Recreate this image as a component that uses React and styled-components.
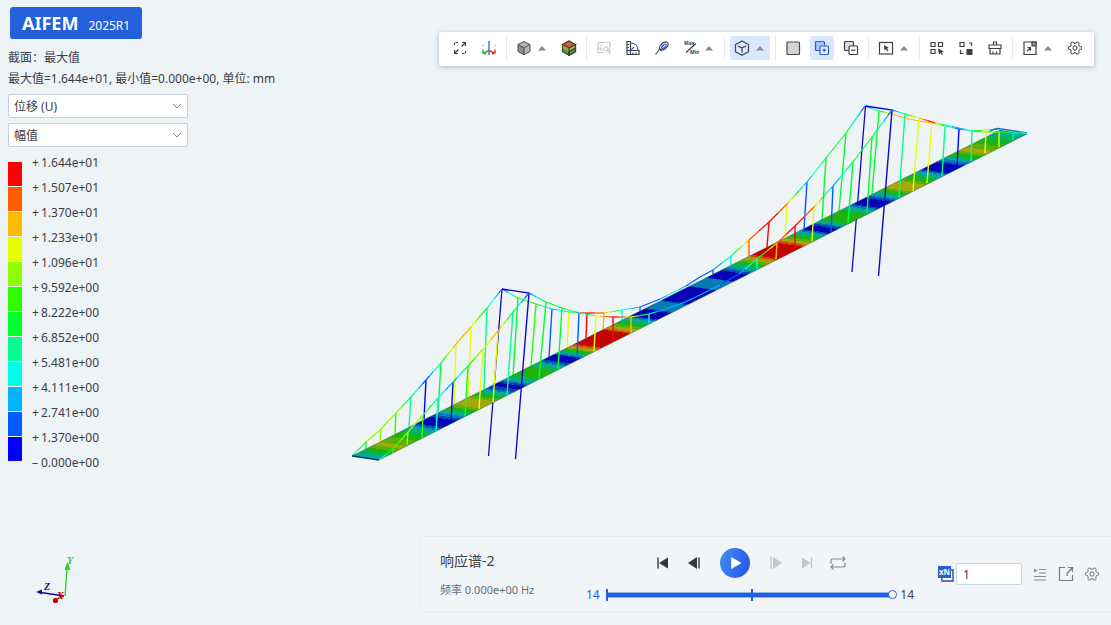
import React, { useState } from "react";
import styled, { createGlobalStyle, css } from "styled-components";
import { Settings } from "lucide-react";

const GlobalStyle = createGlobalStyle`
  * { box-sizing: border-box; }
  body {
    margin: 0;
    background: #eef3f6;
    color: #3c4046;
    font-family: "Noto Sans", "Noto Sans CJK SC", sans-serif;
    font-size: 12px;
  }
  button, input, select { font: inherit; color: inherit; }
  button { border: 0; padding: 0; background: none; cursor: pointer; }
`;

const blue = "#2460dc";

const Page = styled.main`
  display: grid;
  grid-template-columns: minmax(300px, 420px) minmax(0, 1fr);
  grid-template-rows: auto 1fr auto;
  min-height: 100vh;
  overflow: hidden;
`;

const Scene = styled.svg`
  grid-area: 1 / 1 / 4 / 3;
  width: 100%;
  height: 100%;
  min-height: 0;
`;

const Sidebar = styled.aside`
  grid-area: 1 / 1 / 3 / 2;
  z-index: 1;
  padding: 7px 0 0 8px;
`;

const Logo = styled.h1`
  display: inline-flex;
  align-items: baseline;
  gap: 10px;
  height: 32px;
  margin: 0 0 8px 2px;
  padding: 0 12px;
  border-radius: 3px;
  background: ${blue};
  color: #fff;
  font-size: 18px;
  font-weight: 700;
  line-height: 32px;
`;

const Version = styled.span`
  font-size: 12px;
  font-weight: 400;
`;

const Info = styled.p`
  margin: 0;
  line-height: 21px;
  white-space: nowrap;
`;

const Fields = styled.div`
  display: grid;
  gap: 5px;
  width: 180px;
  margin-top: 5px;
`;

const SelectBox = styled.label`
  display: grid;
  grid-template-columns: 1fr 19px;
  align-items: center;

  svg {
    grid-area: 1 / 2;
    pointer-events: none;
  }
`;

const Select = styled.select`
  grid-area: 1 / 1 / 2 / 3;
  appearance: none;
  height: 24px;
  padding: 0 22px 0 5px;
  border: 1px solid #c6cfda;
  border-radius: 2px;
  background: #fff;
`;

const Legend = styled.div`
  display: flex;
  gap: 10px;
  margin-top: 3px;
`;

const Swatches = styled.div`
  display: grid;
  grid-auto-rows: 24px;
  gap: 1px;
  width: 14px;
  padding-top: 12px;
`;

const Swatch = styled.span`
  background: ${(p) => p.$color};
`;

const Values = styled.ul`
  margin: 0;
  padding: 0;
  list-style: none;
  line-height: 25px;
`;

const Value = styled.li`
  display: grid;
  grid-template-columns: 9px auto;
`;

const Toolbar = styled.div`
  grid-area: 1 / 2;
  z-index: 1;
  justify-self: end;
  display: flex;
  align-items: center;
  gap: 5px;
  height: 34px;
  margin: 32px 17px 0 0;
  padding: 0 7px 2px 9px;
  border-radius: 2px;
  background: #fff;
  box-shadow: 0 1px 5px rgba(60, 75, 95, 0.35);
`;

const Divider = styled.span`
  width: 1px;
  height: 24px;
  background: #e8eaed;
`;

const ToolButton = styled.button`
  display: flex;
  align-items: center;
  justify-content: center;
  width: ${(p) => (p.$menu ? 40 : 24)}px;
  height: 24px;
  border-radius: 2px;
  ${(p) => p.$active && css`background: #dbe7fd;`}
  ${(p) => p.$menu && css`justify-content: flex-start; padding-left: 4px; gap: 6px;`}
`;

const Triad = styled.svg`
  grid-area: 3 / 1;
  z-index: 1;
  align-self: end;
  width: 60px;
  height: 60px;
  margin: 0 0 15px 28px;
`;

const Player = styled.section`
  grid-area: 3 / 2;
  z-index: 1;
  display: grid;
  grid-template-columns: 146px minmax(0, 1fr) auto;
  align-items: center;
  height: 76px;
  margin-bottom: 13px;
  padding: 0 9px 0 19px;
  border: 1px solid #e7ecf0;
  border-right: 0;
  border-radius: 3px 0 0 3px;
  background: #f1f5f8;
`;

const StepInfo = styled.div`
  display: grid;
  gap: 9px;
  padding-top: 2px;
`;

const StepName = styled.h2`
  margin: 0;
  font-size: 14px;
  font-weight: 400;
  line-height: 20px;
`;

const Frequency = styled.p`
  margin: 0;
  color: #6a6f76;
  font-size: 11px;
  line-height: 20px;
`;

const Transport = styled.div`
  display: grid;
  gap: 8px;
  padding-top: 3px;
`;

const Controls = styled.div`
  display: flex;
  align-items: center;
  justify-content: center;
  gap: 7px;
`;

const IconButton = styled.button`
  display: grid;
  place-items: center;
  width: ${(p) => (p.$small ? 20 : 24)}px;
  height: 24px;
  color: ${(p) => p.$tone || "#34383d"};
`;

const PlayButton = styled.button`
  display: grid;
  place-items: center;
  width: 30px;
  height: 30px;
  margin: 0 7px;
  border-radius: 50%;
  background: linear-gradient(110deg, #4390f4, #2352e6);
`;

const Timeline = styled.div`
  display: grid;
  grid-template-columns: auto minmax(0, 1fr) auto;
  align-items: center;
  line-height: 18px;
`;

const Start = styled.output`
  margin-right: 6px;
  color: ${blue};
`;

const End = styled.output`
  margin-left: 3px;
`;

const Range = styled.input`
  appearance: none;
  width: 100%;
  height: 12px;
  margin: 0;
  background:
    linear-gradient(${blue}, ${blue}) 0 0 / 2px 12px no-repeat,
    linear-gradient(${blue}, ${blue}) 50% 0 / 2px 12px no-repeat,
    linear-gradient(${blue}, ${blue}) 0 50% / calc(100% - 5px) 4px no-repeat,
    linear-gradient(#8fb2f2, #8fb2f2) 0 50% / calc(100% - 5px) 6px no-repeat;

  &::-webkit-slider-thumb {
    appearance: none;
    width: 9px;
    height: 9px;
    border: 1px solid ${blue};
    border-radius: 50%;
    background: #fff;
  }
`;

const Options = styled.div`
  display: flex;
  align-items: center;
  gap: 6px;
  margin-left: 24px;
`;

const Speed = styled.label`
  display: flex;
  align-items: center;
  gap: 2px;
  margin-right: 2px;
`;

const SpeedInput = styled.input`
  width: 66px;
  height: 22px;
  padding: 0 6px;
  border: 1px solid #ccd7e4;
  border-radius: 2px;
  background: #fff;
`;

/* Contour scale, lowest value first */
const scale = ["#0000ff", "#005cff", "#00b4ff", "#00ffe8", "#00ff8c", "#00ff2e", "#2eff00", "#8cff00", "#e8ff00", "#ffb900", "#ff5c00", "#ff0000"];
const values = ["+1.644e+01", "+1.507e+01", "+1.370e+01", "+1.233e+01", "+1.096e+01", "+9.592e+00", "+8.222e+00", "+6.852e+00", "+5.481e+00", "+4.111e+00", "+2.741e+00", "+1.370e+00", "–0.000e+00"];

/* Shaded deck versions of the scale colours */
const deckScale = ["#0404b4", "#0446b8", "#087ab4", "#06a8a0", "#08b070", "#0cb43c", "#1eb40c", "#5cae08", "#a4a80c", "#c08806", "#c44a04", "#c40404"];

/* Displacement level along the deck: [position 0..1, level 0..11] */
const profile = [
  [0, 2.5], [0.012, 4], [0.022, 6], [0.036, 8], [0.05, 7], [0.065, 6], [0.085, 3.5], [0.1, 0.5], [0.118, 0.2], [0.135, 3], [0.148, 6],
  [0.16, 8], [0.172, 8.4], [0.184, 6.6], [0.2, 3.5], [0.21, 0.6], [0.224, 0.3], [0.236, 3], [0.25, 5.6], [0.266, 6.3], [0.284, 3],
  [0.295, 0.5], [0.31, 0.4], [0.32, 4], [0.332, 8], [0.346, 11], [0.384, 11], [0.396, 8], [0.41, 5.5], [0.422, 2.8], [0.43, 0.3],
  [0.45, 0.2], [0.453, 2], [0.473, 2], [0.478, 0.2], [0.518, 0.2], [0.522, 2], [0.544, 2], [0.548, 0.2], [0.568, 0.4], [0.582, 3.2],
  [0.594, 6], [0.608, 8.6], [0.618, 11], [0.652, 11], [0.663, 8], [0.675, 6], [0.688, 2.8], [0.696, 0.4], [0.708, 0.4], [0.72, 4],
  [0.73, 6.3], [0.75, 5.8], [0.763, 3], [0.773, 0.4], [0.79, 0.3], [0.803, 3], [0.815, 6], [0.826, 8.2], [0.84, 8], [0.852, 6.2],
  [0.87, 3], [0.88, 0.4], [0.9, 0.3], [0.914, 3.2], [0.926, 6], [0.94, 8], [0.952, 7.2], [0.965, 6], [0.985, 4], [1, 2.2],
];

const levelAt = (t) => {
  const i = Math.max(1, profile.findIndex((p) => p[0] >= t));
  const [t0, v0] = profile[i - 1];
  const [t1, v1] = profile[i];
  return Math.round(v0 + ((v1 - v0) * (t - t0)) / (t1 - t0));
};

const deckStops = [];
for (let i = 0; i <= 648; i++) {
  const t = i / 648;
  const color = deckScale[levelAt(t)];
  const last = deckStops[deckStops.length - 1];
  if (!last || last.color !== color) {
    if (last) deckStops.push({ t, color: last.color });
    deckStops.push({ t, color });
  }
}

/* Cable nodes: [x, y, level at the node] */
const backCable = [
  [352, 456, 3], [366, 442, 6], [381, 429, 7], [396, 413, 7], [411, 397, 4], [426, 380, 0], [441, 363, 4], [456, 344, 9], [471, 327, 8],
  [487, 308, 4], [502, 289, 0], [518, 298, 5], [536, 304, 6], [552, 309, 1], [569, 312, 4], [587, 313, 11], [604, 313, 9], [622, 310, 3],
  [640, 307, 1], [660, 299, 1], [672, 293, 3], [686, 286, 1], [700, 277, 1], [713, 270, 1], [731, 256, 3], [749, 240, 9], [769, 222, 11],
  [787, 204, 9], [807, 182, 1], [826, 158, 5], [846, 133, 5], [865, 106, 0], [879, 111, 4], [892, 114, 9], [905, 118, 9], [919, 121, 8],
  [932, 123, 9], [945, 125, 3], [959, 128, 1], [972, 131, 3], [986, 130, 7], [999, 129, 3],
];
const frontCable = [
  [379, 460, 3], [393, 449, 5], [408, 432, 7], [423, 415, 6], [438, 398, 3], [453, 382, 1], [468, 366, 5], [483, 349, 7], [498, 331, 9],
  [513, 312, 4], [529, 293, 0], [546, 302, 5], [562, 308, 5], [579, 313, 1], [596, 316, 7], [613, 317, 11], [631, 317, 8], [649, 314, 3],
  [666, 309, 1], [685, 302, 2], [702, 294, 2], [720, 285, 1], [739, 274, 1], [757, 259, 4], [777, 243, 9], [795, 226, 11], [814, 207, 9],
  [833, 186, 1], [853, 162, 4], [872, 137, 5], [892, 110, 0], [905, 114, 4], [919, 118, 8], [932, 122, 11], [945, 126, 4], [959, 129, 0],
  [972, 131, 4], [986, 132, 7], [999, 132, 5], [1013, 133, 4], [1027, 133, 2],
];

/* Hangers: [x top, y top, x bottom, y bottom, level] */
const backHangers = [
  [366, 442, 366, 449, 5], [381, 429, 380, 441, 7], [396, 413, 395, 434, 6], [411, 397, 409, 427, 4], [426, 380, 424, 419, 0],
  [441, 363, 438, 412, 5], [456, 344, 454, 404, 8], [471, 327, 468, 397, 8], [487, 308, 484, 389, 4], [518, 298, 513, 376, 5],
  [536, 304, 531, 366, 6], [552, 309, 549, 357, 1], [569, 312, 567, 347, 8], [587, 313, 586, 338, 11], [604, 313, 603, 330, 9],
  [622, 310, 622, 320, 3], [640, 307, 640, 311, 1], [713, 270, 713, 274, 1], [731, 256, 731, 265, 3], [749, 240, 749, 256, 10],
  [769, 222, 767, 247, 11], [787, 204, 785, 237, 8], [807, 182, 804, 229, 1], [826, 158, 822, 220, 5], [846, 133, 839, 211, 5],
  [879, 111, 872, 194, 5],
];
const frontHangers = [
  [393, 449, 393, 453, 6], [408, 432, 407, 445, 7], [423, 415, 422, 438, 6], [438, 398, 436, 431, 3], [453, 382, 451, 423, 0],
  [468, 366, 465, 416, 5], [483, 349, 479, 409, 8], [498, 331, 493, 402, 8], [513, 312, 507, 395, 4], [546, 302, 539, 379, 5],
  [562, 308, 558, 369, 5], [579, 313, 577, 359, 1], [596, 316, 594, 351, 8], [613, 317, 613, 342, 11], [631, 317, 631, 333, 9],
  [649, 314, 649, 323, 3], [739, 274, 738, 279, 0], [757, 259, 757, 269, 3], [777, 243, 776, 259, 9], [795, 226, 795, 250, 11],
  [814, 207, 812, 241, 8], [833, 186, 831, 232, 1], [853, 162, 848, 223, 5], [872, 137, 867, 213, 5], [905, 114, 899, 197, 4],
  [919, 119, 913, 191, 8], [932, 123, 927, 183, 8], [945, 127, 942, 176, 4], [959, 129, 957, 167, 0], [972, 131, 971, 161, 4],
  [986, 131, 985, 153, 8], [999, 131, 999, 147, 8], [1013, 133, 1013, 140, 4],
];

function Cable({ id, nodes }) {
  return nodes.slice(1).map(([x, y, level], i) => {
    const [x0, y0, level0] = nodes[i];
    const steps = Math.max(1, Math.abs(level - level0));
    return (
      <g key={id + i} strokeWidth="1.2">
        {Array.from({ length: steps }, (_, k) => (
          <line
            key={k}
            x1={x0 + ((x - x0) * k) / steps}
            y1={y0 + ((y - y0) * k) / steps}
            x2={x0 + ((x - x0) * (k + 1)) / steps}
            y2={y0 + ((y - y0) * (k + 1)) / steps}
            stroke={scale[Math.round(level0 + ((level - level0) * (k + 0.5)) / steps)]}
          />
        ))}
      </g>
    );
  });
}

const Hangers = ({ items }) =>
  items.map(([x1, y1, x2, y2, level]) => (
    <line key={x1} x1={x1} y1={y1} x2={x2} y2={y2} stroke={scale[level]} strokeWidth="1.4" />
  ));

function BridgeModel() {
  return (
    <Scene viewBox="0 0 1111 625" role="img" aria-label="桥梁位移云图">
      <defs>
        <linearGradient id="deck">
          {deckStops.map((s, i) => <stop key={i} offset={s.t} stopColor={s.color} />)}
        </linearGradient>
      </defs>
      <g stroke="#0a0ac8" strokeWidth="1.3">
        <path d="M502 289 488.500 456M865.500 106 852 272" fill="none" />
      </g>
      <Hangers items={backHangers} />
      <Cable id="b" nodes={backCable} />
      <rect width="1" height="1" fill="url(#deck)" transform="matrix(648 -326 27 4 352 456)" />
      <path d="M352 456 1000 130M379 460 1027 134" stroke="#2c4a3c" strokeWidth=".6" opacity=".7" />
      <path d="M352 456 379 460" stroke="#083c78" strokeWidth="1.4" />
      <path d="M989 132Q996 127 1001 129L1027 133" fill="none" stroke="#0880a8" strokeWidth="1.5" />
      <path d="M502 289 529 293 515.500 459M865.500 106 892 110 878.500 276" fill="none" stroke="#0a0ac8" strokeWidth="1.4" />
      <Hangers items={frontHangers} />
      <Cable id="f" nodes={frontCable} />
    </Scene>
  );
}

const Icon = ({ size = 16, children }) => (
  <svg width={size} height={size} viewBox="0 0 16 16" fill="none" stroke="currentColor" strokeWidth="1.2" aria-hidden="true">
    {children}
  </svg>
);

const Caret = () => (
  <svg width="8" height="5" viewBox="0 0 8 5" aria-hidden="true"><path d="M4 0 8 4.500H0z" fill="#85888c" /></svg>
);

const GearIcon = styled(Settings).attrs({ size: 16, strokeWidth: 1.6 })`
  color: ${(p) => p.$tone || "#55595e"};
  transform: rotate(30deg);
`;

const tools = [
  { name: "适应窗口", icon: <Icon><path d="M6 2.500H2.500V6M10 13.500h3.500V10" strokeDasharray="2.500 1.200" /><path d="M9.500 6.500 13.500 2.500M10 2.500h3.500V6M6.500 9.500 2.500 13.500M2.500 10v3.500H6" /></Icon> },
  { name: "坐标系", icon: <Icon><path d="M8 1v14" stroke="#3a6cd8" strokeWidth="1.400" /><path d="M8 10.500 2.500 13M2 9.500v3.500l3 1" stroke="#20b040" strokeWidth="1.400" /><path d="m8 10.500 5.500 2.500M14 9.500v3.500l-3 1" stroke="#e03030" strokeWidth="1.400" /><path d="M2 4.500v2M14 4.500v2" stroke="#bbb" /></Icon> },
  null,
  { name: "实体显示", menu: true, icon: <Icon><path d="M8 1.500 14 4.500v7L8 14.800 2 11.500v-7z" fill="#b4b6b8" stroke="none" /><path d="M2 4.500 8 8v6.800L2 11.500z" fill="#8e9092" stroke="none" /><path d="M8 1.500 14 4.500v7L8 14.800 2 11.500v-7zM2 4.500 8 8l6-3.500M8 8v6.500" stroke="#3c3e40" strokeWidth=".9" /></Icon> },
  { name: "云图", icon: <Icon><path d="M1.500 4.500 8 1l6.500 3.500L8 8z" fill="#d9622c" /><path d="M1.500 4.500 8 8v7.200l-6.500-3.500z" fill="#46a044" /><path d="M14.500 4.500 8 8v7.200l6.500-3.500z" fill="#d8a838" /><path d="m8 11.500 6.500-3.500v3.700L8 15.200z" fill="#4a9838" /><path d="m1.500 4.500 6.500 3.500v3.500L1.500 8z" fill="#c8b43c" stroke="none" opacity=".6" /><path d="m8 1 6.500 3.500v7.200L8 15.200l-6.500-3.500V4.500zM1.500 4.500 8 8l6.500-3.500M8 8v7" stroke="#4a4038" strokeWidth=".7" /></Icon> },
  null,
  { name: "查询", icon: <Icon><g stroke="#c8cacc"><path d="M8 12.500H2v-10h12v5M4 5.500h3M4 10h3" /><circle cx="10" cy="9" r="2" /><path d="M4 10V8h2M11.500 10.500 14.500 14M12.500 8l1.500 2v4" /></g></Icon> },
  { name: "测量", icon: <Icon><path d="M2 1.500h3.500v9H14v4H2zM2 4.500h2M2 7.500h2M2 10.500h3.500v4M8 14.500v-2M11 14.500v-2" /><path d="M5.500 3C10 3 13 6 13 10.500M5.500 10.500 9 7" stroke="#2460dc" /></Icon> },
  { name: "探针", icon: <Icon><path d="m1.500 14.500 4-5M5 8l3 3" /><path d="M5.500 9C5 6 9 1.500 12.500 2c2.500.5 2 3.500 0 5.500S8 11.500 5.500 9z" /><path d="M7.500 8c0-2 2.500-4 4-4s.5 2-.5 3-2.500 2-3.500 1z" stroke="#2460dc" /></Icon> },
  { name: "最大最小", menu: true, icon: <Icon><path d="m3 12.500 10-9" /><g fill="currentColor" stroke="none" fontSize="5" fontWeight="700"><text x="1" y="5">Max</text><text x="7" y="14">Min</text></g></Icon> },
  null,
  { name: "视图", menu: true, active: true, icon: <Icon><path d="m8 1 6.500 3.500v7.300L8 15.300l-6.500-3.500V4.500z" strokeLinejoin="round" stroke="#3c4252" /><path d="m4 6 4 2 4-2M8 8v4.500" stroke="#3c4252" /></Icon> },
  null,
  { name: "框选", icon: <Icon><rect x="2" y="2" width="12.500" height="12.500" rx="1" fill="#d3d3d3" stroke="#4a4a4a" /></Icon> },
  { name: "添加选择", active: true, icon: <Icon><rect x="1.500" y="1.500" width="9" height="9" rx="1" fill="#a9c4fa" stroke="#2b5fd4" /><rect x="6" y="6" width="8.500" height="8.500" rx="1" fill="#e6eeff" stroke="#2b5fd4" /><path d="M8.500 10.200h3.500M10.200 8.500V12" stroke="#2b5fd4" /></Icon> },
  { name: "移除选择", icon: <Icon><rect x="1.500" y="1.500" width="9" height="9" rx="1" fill="#ddd" /><rect x="6" y="6" width="8.500" height="8.500" rx="1" fill="#fff" /><path d="M8 10.200h4.500" /></Icon> },
  null,
  { name: "选取", menu: true, icon: <Icon><rect x="1.500" y="2.500" width="13" height="11.500" /><path d="m6 5 5 3-2 .6 1.500 2.200-1 .7L8 9.300l-1.500 1.500z" fill="currentColor" stroke="none" /></Icon> },
  null,
  { name: "多选", icon: <Icon><path d="M2 2.500h4v4H2zM9.500 2.500h4v4h-4zM2 9.500h4v4H2z" /><path d="m9 8.500 6 3-2.500.8 1.500 2-1 .7-1.500-2L10 14.500z" fill="currentColor" stroke="none" /></Icon> },
  { name: "反选", icon: <Icon><path d="M2 2.500h4v4H2zM11 3h2.500v3M2.500 10v3.500h3" /><path d="M8.500 9h6v6h-6z" fill="currentColor" stroke="none" /></Icon> },
  { name: "清除", icon: <Icon><path d="M6.500 4.500V2h3v2.500M2 5h12v3.500H2zM3 8.500V14h10V8.500M6 14v-2.500M9.500 14v-2.500" /></Icon> },
  null,
  { name: "导出视图", menu: true, icon: <Icon><path d="M2 2h12v12.500H2z" /><path d="M10 2h4v4h-4z" fill="#999" /><path d="m5 11 3.500-3.500M5.500 7.500h3v3.300" /></Icon> },
  { name: "设置", icon: <GearIcon /> },
];

function ToolStrip() {
  return (
    <Toolbar role="toolbar" aria-label="视图工具">
      {tools.map((tool, i) =>
        tool ? (
          <ToolButton key={tool.name} type="button" aria-label={tool.name} $menu={tool.menu} $active={tool.active}>
            {tool.icon}
            {tool.menu && <Caret />}
          </ToolButton>
        ) : (
          <Divider key={i} />
        )
      )}
    </Toolbar>
  );
}

const DropDown = ({ label, option }) => (
  <SelectBox>
    <Select aria-label={label}><option>{option}</option></Select>
    <svg width="16" height="10" viewBox="0 0 16 10" fill="none" stroke="#7c8188" aria-hidden="true"><path d="m4 3 4 4 4-4" /></svg>
  </SelectBox>
);

function AxisTriad() {
  return (
    <Triad viewBox="28 550 60 60" role="img" aria-label="坐标轴">
      <path d="M65 596 67 569" stroke="#1fd81f" strokeWidth="1.300" />
      <path d="m67.500 562 3 8-6-.5z" fill="#1fd81f" />
      <path d="M64 596 41 592.500" stroke="#0a0aa0" strokeWidth="1.300" />
      <path d="m36 592 6-2.500v5z" fill="#0a0aa0" />
      <circle cx="55.500" cy="600.500" r="2.600" fill="#b80000" />
      <path d="m57 599 7-3" stroke="#c00" />
      <g fontFamily="Liberation Serif, serif" fontStyle="italic" fontSize="10">
        <text x="67" y="564" fill="#1fd81f" fontWeight="700">Y</text>
        <text x="44" y="590" fill="#0a0aa0" fontWeight="700">Z</text>
        <text x="57" y="599" fill="#c00000" fontWeight="700">X</text>
      </g>
    </Triad>
  );
}

function PlayerBar() {
  const [frame, setFrame] = useState(14);
  const [speed, setSpeed] = useState("1");
  return (
    <Player aria-label="动画控制">
      <StepInfo>
        <StepName>响应谱-2</StepName>
        <Frequency>频率 0.000e+00 Hz</Frequency>
      </StepInfo>
      <Transport>
        <Controls>
          <IconButton type="button" aria-label="第一帧"><Icon><path d="M3 2.500v11" strokeWidth="1.400" /><path d="M13 2.500v11L4 8z" fill="currentColor" stroke="none" /></Icon></IconButton>
          <IconButton type="button" aria-label="上一帧"><Icon><path d="M13 2.500v11" strokeWidth="1.400" /><path d="M11 2v12L2 8z" fill="currentColor" stroke="none" /></Icon></IconButton>
          <PlayButton type="button" aria-label="播放"><Icon><path d="m4.500 2.500 9.500 5.500-9.500 5.500z" fill="#fff" stroke="#fff" strokeLinejoin="round" strokeWidth=".6" /></Icon></PlayButton>
          <IconButton type="button" aria-label="下一帧" $tone="#c3c6ca"><Icon><path d="M3 2v12" strokeWidth="1.400" /><path d="M5 2v12l9-6z" fill="currentColor" stroke="none" /></Icon></IconButton>
          <IconButton type="button" aria-label="最后一帧" $tone="#c3c6ca"><Icon><path d="M12.500 2.500v11" strokeWidth="1.400" /><path d="M3 2.500v11L11.500 8z" fill="currentColor" stroke="none" /></Icon></IconButton>
          <IconButton type="button" aria-label="循环" $tone="#888c91"><Icon><path d="M1 8.500V6q0-2 2-2h12M12.500 1.500 15 4l-2.500 2.500M15 7.500V10q0 2-2 2H1M3.500 9.500 1 12l2.500 2.500" /></Icon></IconButton>
        </Controls>
        <Timeline>
          <Start>14</Start>
          <Range type="range" min="0" max="14" value={frame} onChange={(e) => setFrame(+e.target.value)} aria-label="帧" />
          <End>{frame}</End>
        </Timeline>
      </Transport>
      <Options>
        <Speed>
          <svg width="16" height="16" viewBox="0 0 16 16" role="img" aria-label="倍速">
            <path d="M4 4h11v11H4z" fill="#fff" stroke="#24509c" strokeWidth="1.400" />
            <path d="M0 0h13v12H0z" fill={blue} />
            <text x="1" y="9" fill="#fff" fontSize="8" fontWeight="700">xN</text>
          </svg>
          <SpeedInput value={speed} onChange={(e) => setSpeed(e.target.value)} aria-label="倍速" />
        </Speed>
        <IconButton type="button" aria-label="列表" $small $tone="#888c91"><Icon><path d="M7 3.500h7M7 7h7M2 10.500h12M2 14h12" /><path d="m2 2.500 3.500 2-3.500 2z" fill="currentColor" stroke="none" /></Icon></IconButton>
        <IconButton type="button" aria-label="导出" $small $tone="#777b80"><Icon><path d="M7 1.500H1.500v13h13V9M10 1.500h4.500V6M14 2 9 7.500V10" /></Icon></IconButton>
        <IconButton type="button" aria-label="播放设置" $small><GearIcon $tone="#85898e" /></IconButton>
      </Options>
    </Player>
  );
}

export default function App() {
  return (
    <>
      <GlobalStyle />
      <Page>
        <BridgeModel />
        <Sidebar>
          <Logo>AIFEM <Version>2025R1</Version></Logo>
          <Info lang="zh-CN">截面：最大值</Info>
          <Info>最大值=1.644e+01, 最小值=0.000e+00, 单位: mm</Info>
          <Fields>
            <DropDown label="结果类型" option="位移 (U)" />
            <DropDown label="分量" option="幅值" />
          </Fields>
          <Legend>
            <Swatches>
              {[...scale].reverse().map((c) => <Swatch key={c} $color={c} />)}
            </Swatches>
            <Values>
              {values.map((v) => <Value key={v}><span>{v[0]}</span><span>{v.slice(1)}</span></Value>)}
            </Values>
          </Legend>
        </Sidebar>
        <ToolStrip />
        <AxisTriad />
        <PlayerBar />
      </Page>
    </>
  );
}
